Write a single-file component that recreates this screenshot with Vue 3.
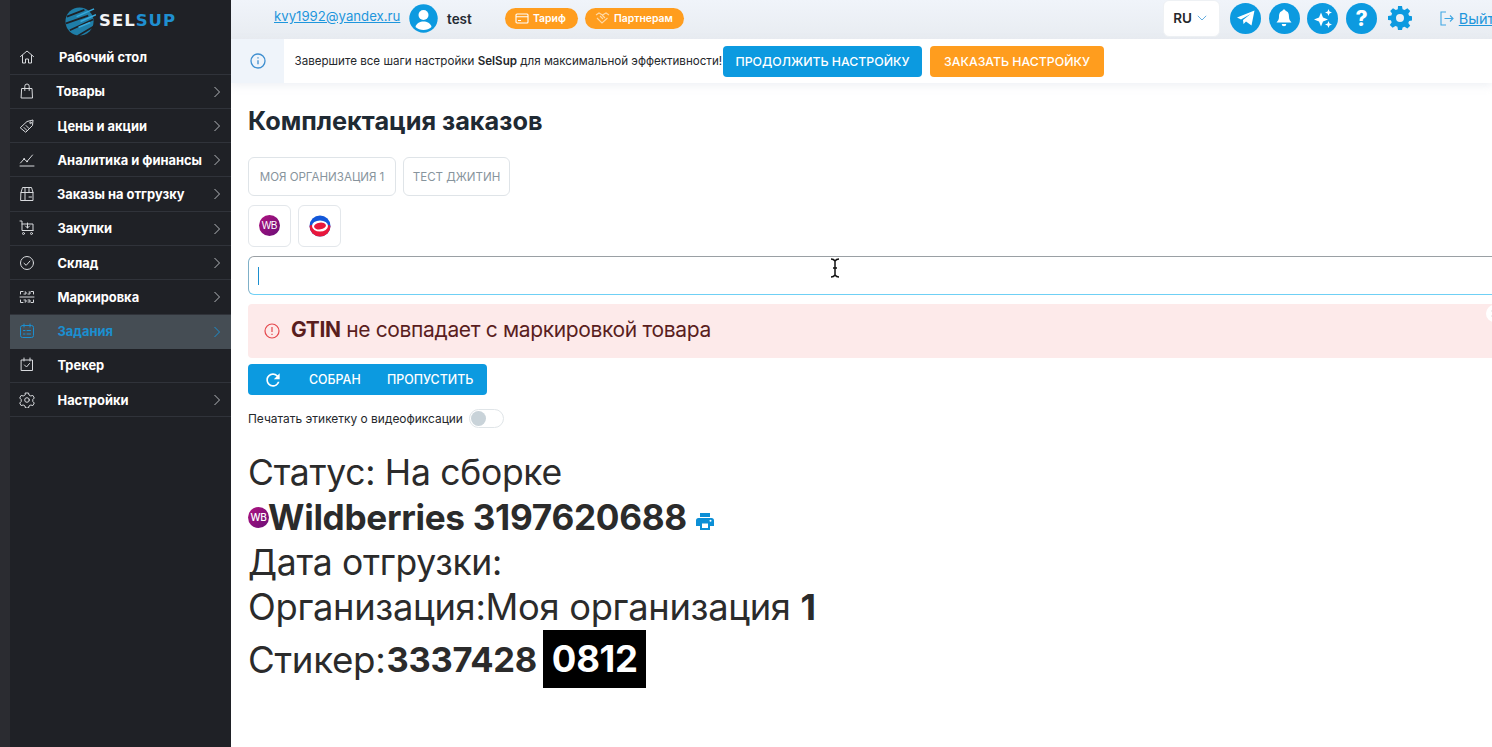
<script setup>
const menu = [
  { label: 'Рабочий стол', icon: 'home', pad: 49, plain: true },
  { label: 'Товары', icon: 'bag', pad: 46 },
  { label: 'Цены и акции', icon: 'tag', pad: 47.5 },
  { label: 'Аналитика и финансы', icon: 'chart', pad: 47.5 },
  { label: 'Заказы на отгрузку', icon: 'box', pad: 47 },
  { label: 'Закупки', icon: 'cart', pad: 47.5 },
  { label: 'Склад', icon: 'check', pad: 47.5 },
  { label: 'Маркировка', icon: 'scan', pad: 47.5 },
  { label: 'Задания', icon: 'tasks', pad: 47.5, active: true },
  { label: 'Трекер', icon: 'tracker', pad: 47.5, plain: true },
  { label: 'Настройки', icon: 'gear', pad: 47.5 }
]
</script>

<template>
  <div class="app">
    <div class="rail"></div>
    <aside class="sidebar">
      <div class="logo">
        <svg width="31" height="31" viewBox="0 0 32 32" fill="none">
          <circle cx="15" cy="17" r="14.500" fill="#1f7ea8" />
          <path d="M2 12 L20 5 M1 19 L24 11 M5 26 L29 15 M13 32 L30 22" stroke="#1f2126" stroke-width="1.800" />
          <path d="M12 12 L30 4 M16 17 L32 10 M14 23 L26 18" stroke="#37a9dc" stroke-width="1.600" />
        </svg>
        <span class="logo-text"><b class="sel">SEL</b><b class="sup">SUP</b></span>
      </div>
      <nav class="menu">
        <div v-for="item in menu" :key="item.label" class="row" :class="{ active: item.active }">
          <span class="ico">
            <svg width="16" height="16" viewBox="0 0 16 16" fill="none" stroke="currentColor" stroke-width="1" stroke-linecap="round" stroke-linejoin="round">
              <template v-if="item.icon === 'home'"><path d="M1.500 7.500 8 2l6.500 5.500M3.500 6.500V14h3v-4h3v4h3V6.500" /></template>
              <template v-else-if="item.icon === 'bag'"><path d="M3 5.500h10l.500 9.500h-11zM5.800 7.500V3.200a2.200 2.200 0 0 1 4.400 0v4.300" /></template>
              <template v-else-if="item.icon === 'tag'"><path d="M1.500 9.500 8 3.500l6-1.500-.5 5.500-6.500 6.500zM5 9.500l3 3M7 7.500l3 3" /><circle cx="11.500" cy="4.800" r=".8" /></template>
              <template v-else-if="item.icon === 'chart'"><path d="M1 14h14M1.500 11 5 7l3 2.500L13.500 3" /><circle cx="5" cy="7" r=".5" /><circle cx="8" cy="9.500" r=".5" /></template>
              <template v-else-if="item.icon === 'box'"><path d="M2 6.500 3.500 1.500h9L14 6.500V14.500H2zM2 6.500h12M6 1.500v13M10 1.500v5M10 11h2.500" /></template>
              <template v-else-if="item.icon === 'cart'"><path d="M1 1h2v9.500h11M3 4h11v6.500M8.500 3v5M6.500 6l2 2 2-2" /><circle cx="4.500" cy="13.500" r="1" /><circle cx="12.500" cy="13.500" r="1" /></template>
              <template v-else-if="item.icon === 'check'"><circle cx="8" cy="8" r="6.500" /><path d="M5 8.300 7.200 10.300 11 6" /></template>
              <template v-else-if="item.icon === 'scan'"><path d="M1.500 5V2.500H4M12 2.500h2.500V5M1.500 11v2.500H4M12 13.500h2.500V11M6 3h1v2H5M9 5h2V3h-1M5 11h2v2H6M9 13h2v-2H9M1 8h14" /></template>
              <template v-else-if="item.icon === 'tasks'"><rect x="1.500" y="2.500" width="13" height="12" rx="2" /><path d="M5 1v3M11 1v3M4.500 7.500h1.500M8 7.500h3.500M4.500 11h1.500M8 11h3.500" /></template>
              <template v-else-if="item.icon === 'tracker'"><path d="M2.500 3h11v10.500h-11zM5 1v3M11 1v3M5.500 8l2 2 3-3.500" /></template>
              <template v-else><path d="M6.500 1.500h3l.5 2 1.800 1 2-.6 1.500 2.600-1.500 1.500 0 2 1.500 1.500-1.500 2.600-2-.6-1.800 1-.5 2h-3l-.5-2-1.800-1-2 .6L.7 11.500l1.500-1.500v-2L.7 6.500l1.500-2.600 2 .6 1.800-1z" transform="translate(0 -.5)" /><circle cx="8" cy="8" r="2.300" /></template>
            </svg>
          </span>
          <span class="label" :style="{ left: item.pad + 'px' }">{{ item.label }}</span>
          <svg v-if="!item.plain" class="chev" width="8" height="12" viewBox="0 0 8 12" fill="none" stroke="currentColor" stroke-width="1"><path d="M1.500 1 6.500 6l-5 5" /></svg>
        </div>
      </nav>
    </aside>

    <main class="main">
      <header class="top">
        <a class="mail">kvy1992@yandex.ru</a>
        <svg class="avatar" width="29" height="29" viewBox="0 0 29 29">
          <circle cx="14.500" cy="14.500" r="14.200" fill="#0c9ae0" />
          <circle cx="14.500" cy="11" r="5" fill="#fff" />
          <path d="M6.500 23c1-4 4.500-5.500 8-5.500s7 1.500 8 5.500c-2 2-5 3-8 3s-6-1-8-3z" fill="#fff" />
        </svg>
        <span class="user">test</span>
        <span class="pill p1">
          <svg width="14" height="11" viewBox="0 0 14 11" fill="none" stroke="#fff" stroke-width="1.100"><rect x="1" y="1" width="12" height="9" rx="1" /><path d="M1 3.800h12M3 7.500h3" /></svg>
          Тариф
        </span>
        <span class="pill p2">
          <svg width="15" height="12" viewBox="0 0 15 12" fill="none" stroke="#ffd9a6" stroke-width="1.100"><path d="M1 3 4 1l3.500 2L11 1l3 2M2 6l5 5 5.500-5M5 4l3 3M7 3l3 3" /></svg>
          Партнерам
        </span>
        <div class="spacer"></div>
        <div class="lang">
          <span>RU</span>
          <svg width="10" height="6" viewBox="0 0 10 6" fill="none" stroke="#65aee0" stroke-width="1"><path d="M.8.8 5 5 9.200.8" /></svg>
        </div>
        <div class="rounds">
          <span class="round">
            <svg width="20" height="18" viewBox="0 0 20 18"><path d="M1 8.500 18.500 1.500 15.500 16.500 10 12.500 7.500 15 7 11 14.500 5 5 10.500z" fill="#fff" /></svg>
          </span>
          <span class="round">
            <svg width="18" height="20" viewBox="0 0 18 20"><path d="M9 1.500c1 0 1.500.6 1.500 1.300 3 .8 3.500 3.500 3.500 6.200 0 2.500 1.200 4 2.500 5.500H1.500C2.800 13 4 11.500 4 9c0-2.700.5-5.400 3.500-6.200C7.500 2.100 8 1.500 9 1.500z M6.700 16h4.600a2.300 2.300 0 0 1-4.600 0z" fill="#fff" /></svg>
          </span>
          <span class="round">
            <svg width="20" height="20" viewBox="0 0 20 20" fill="#fff"><path d="M8 4.500 10 9.500l5 2-5 2-2 5-2-5-5-2 5-2zM15.500 1l1 2.500L19 4.500l-2.500 1-1 2.500-1-2.500-2.500-1 2.500-1zM15.500 13l1 2.500 2.500 1-2.500 1-1 2.500-1-2.500-2.500-1 2.500-1z" /></svg>
          </span>
          <span class="round q">?</span>
          <svg class="cog" width="24" height="24" viewBox="0 0 24 24"><path fill="#0c9ae0" fill-rule="evenodd" d="M10 0h4l.6 3.300 2 .8L19.400 2.200l2.800 2.800-1.900 2.800.8 2 3.300.6v4l-3.300.6-.8 2 1.900 2.800-2.800 2.800-2.800-1.900-2 .8L14 24h-4l-.6-3.300-2-.8-2.800 1.900-2.800-2.800 1.900-2.800-.8-2L0 14v-4l3.300-.6.8-2L2.200 5 5 2.200l2.800 1.900 2-.8zM12 8a4 4 0 1 0 0 8 4 4 0 0 0 0-8z" /></svg>
        </div>
        <span class="exit">
          <svg width="14" height="15" viewBox="0 0 14 15" fill="none" stroke="#3ea6e3" stroke-width="1.100"><path d="M6 1H1v13h5M4.500 7.500H13M10 4.500l3 3-3 3" /></svg>
          <a>Выйти</a>
        </span>
      </header>

      <section class="banner">
        <div class="info">
          <svg width="16" height="16" viewBox="0 0 16 16" fill="none" stroke="#3f8fd0" stroke-width="1.300"><circle cx="8" cy="8" r="7" /><path d="M8 7.200v4M8 4.300v1.300" /></svg>
        </div>
        <div class="banner-body">
          <span class="banner-text">Завершите все шаги настройки <b>SelSup</b> для максимальной эффективности!</span>
          <button class="cta blue">ПРОДОЛЖИТЬ НАСТРОЙКУ</button>
          <button class="cta orange">ЗАКАЗАТЬ НАСТРОЙКУ</button>
        </div>
      </section>

      <div class="content">
        <h1>Комплектация заказов</h1>
        <div class="orgs">
          <button class="org o1">МОЯ ОРГАНИЗАЦИЯ 1</button>
          <button class="org o2">ТЕСТ ДЖИТИН</button>
        </div>
        <div class="markets">
          <button class="mp"><span class="wb">WB</span></button>
          <button class="mp">
            <svg width="22" height="22" viewBox="0 0 22 22">
              <circle cx="11" cy="11" r="10.500" fill="#1257d9" />
              <path d="M.5 11a10.500 10.500 0 0 0 21 0c0-1-6-2-10.500-2S.5 10 .5 11z" fill="#e8173c" />
              <ellipse cx="11" cy="11" rx="8" ry="5.500" fill="#fff" />
              <ellipse cx="11" cy="11" rx="6" ry="3.400" fill="#e8173c" transform="rotate(-8 11 11)" />
            </svg>
          </button>
        </div>
        <div class="field"><span class="caret"></span></div>
        <div class="alert">
          <svg width="16" height="16" viewBox="0 0 16 16" fill="none" stroke="#e5484d" stroke-width="1.200"><circle cx="8" cy="8" r="7" /><path d="M8 4v5M8 10.800v1.300" /></svg>
          <span class="alert-text"><b>GTIN</b> не совпадает с маркировкой товара</span>
          <span class="alert-close">
            <svg width="17" height="17" viewBox="0 0 17 17" fill="none" stroke="#ddd" stroke-width="1.300"><path d="M5.500 5.500l6 6M11.500 5.500l-6 6" /></svg>
          </span>
        </div>
        <div class="actions">
          <span class="reload">
            <svg width="20" height="20" viewBox="0 0 24 24"><path fill="#fff" d="M17.650 6.350A7.958 7.958 0 0 0 12 4c-4.420 0-7.990 3.580-7.990 8s3.570 8 7.990 8c3.730 0 6.840-2.550 7.730-6h-2.080A5.990 5.990 0 0 1 12 18c-3.310 0-6-2.690-6-6s2.690-6 6-6c1.660 0 3.140.69 4.220 1.780L13 11h7V4l-2.350 2.350z" /></svg>
          </span>
          <span class="act a1">СОБРАН</span>
          <span class="act">ПРОПУСТИТЬ</span>
        </div>
        <div class="toggle-row">
          <span>Печатать этикетку о видеофиксации</span>
          <span class="toggle"><i></i></span>
        </div>
        <div class="info-block">
          <div class="l-status">Статус: На сборке</div>
          <div class="wb-line">
            <span class="wb small">WB</span><b>Wildberries 3197620688</b>
            <svg class="printer" width="18" height="17" viewBox="0 0 18 17"><path fill="#0c8fd6" fill-rule="evenodd" d="M4 0h10v4H4zM2.500 5h13A2.500 2.500 0 0 1 18 7.500V13h-4v4H4v-4H0V7.500A2.500 2.500 0 0 1 2.500 5zM6 10.500V15h6v-4.500zM14.500 6.800a1 1 0 1 0 0 2 1 1 0 0 0 0-2z" /></svg>
          </div>
          <div class="l-status">Дата отгрузки:</div>
          <div class="l-org">Организация:Моя организация <b>1</b></div>
          <div class="sticker"><span class="s-label">Стикер:</span><b>3337428</b><span class="code">0812</span></div>
        </div>
      </div>
    </main>

    <svg class="ibeam" width="10" height="20" viewBox="0 0 10 20" fill="none" stroke="#111" stroke-width="1.500"><path d="M1 1c2 0 3 .5 4 2 1-1.500 2-2 4-2M5 3v14M1 19c2 0 3-.5 4-2 1 1.500 2 2 4 2M3 10h4" /></svg>
  </div>
</template>

<style>
html, body { margin: 0; overflow: hidden; background: #fff; }
</style>

<style scoped>
.app {
  position: relative;
  display: flex;
  width: 1492px;
  height: 747px;
  overflow: hidden;
  font-family: Inter, "Noto Sans", sans-serif;
  color: #25282c;
  background: #fff;
}
.rail { width: 10px; flex: none; background: #2b2c31; }
.sidebar { width: 221px; flex: none; background: #1f2126; color: #fff; }
.logo { height: 40.400px; display: flex; align-items: center; padding-left: 55px; gap: 3px; box-sizing: border-box; }
.logo-text { font-family: "DejaVu Sans", sans-serif; font-size: 16.500px; letter-spacing: 1px; }
.sel { color: #f2f4f6; }
.sup { color: #1f8fd0; }
.row {
  position: relative;
  height: 34.280px;
  box-sizing: border-box;
  border-bottom: 1px solid #30333a;
  display: flex;
  align-items: center;
  font-size: 12.900px;
  font-weight: 700;
}
.ico { margin-left: 8.500px; width: 16px; height: 16px; color: #d8dadd; display: flex; }
.label { position: absolute; top: 50%; transform: translateY(-50%); white-space: nowrap; }
.chev { position: absolute; right: 10px; top: 11px; color: #b4b7bb; }
.row.active { background: #454d54; color: #1b8fd0; border-bottom-color: #454d54; }
.row.active .ico, .row.active .chev { color: #1b8fd0; }

.main { flex: none; width: 1261px; overflow: hidden; }
.top {
  height: 39px;
  display: flex;
  align-items: center;
  background: linear-gradient(180deg, #f0f4fa, #e8ecf1);
  padding-left: 43px;
  width: 1300px;
  box-sizing: border-box;
}
.mail { color: #1e96dc; font-size: 13.200px; text-decoration: underline; margin-top: -7px; width: 125px; white-space: nowrap; flex: none; }
.avatar { margin-left: 10px; margin-top: -3px; flex: none; }
.user { font-size: 13.500px; font-weight: 600; margin-left: 9px; margin-top: -2px; color: #242a33; width: 58px; flex: none; }
.pill {
  display: flex;
  align-items: center;
  gap: 4px;
  height: 21px;
  border-radius: 11px;
  background: #ff9d1e;
  color: #fff;
  font-size: 10.400px;
  font-weight: 600;
  margin-top: -3px;
  padding-left: 10px;
  box-sizing: border-box;
  flex: none;
}
.p1 { width: 73px; }
.p2 { margin-left: 7px; width: 99px; }
.spacer { width: 479px; flex: none; }
.lang {
  width: 57px;
  height: 37px;
  margin-top: -3px;
  background: #fff;
  border: 1px solid #eef1f4;
  border-radius: 6px;
  box-sizing: border-box;
  display: flex;
  align-items: center;
  justify-content: center;
  gap: 5px;
  padding-right: 3px;
  font-size: 13.500px;
  font-weight: 600;
  flex: none;
}
.rounds { display: flex; align-items: center; gap: 7.700px; margin-left: 10px; margin-top: -3px; flex: none; }
.round {
  width: 31px;
  height: 31px;
  border-radius: 50%;
  background: #0c9ae0;
  display: flex;
  align-items: center;
  justify-content: center;
  color: #fff;
}
.q { font-size: 21px; font-weight: 800; }
.cog { margin-left: 3px; }
.exit { display: flex; align-items: center; gap: 5px; margin-left: 28px; margin-top: -3px; flex: none; }
.exit a { color: #1e96dc; font-size: 14.500px; text-decoration: underline; }

.banner { height: 44px; display: flex; box-shadow: 0 3px 8px rgba(220, 225, 232, .45); position: relative; }
.info { width: 53px; background: #eff4fa; display: flex; align-items: center; justify-content: center; }
.banner-body { flex: 1; display: flex; align-items: center; padding-left: 10.500px; }
.banner-text { font-size: 11.600px; color: #25282c; white-space: nowrap; width: 428.500px; flex: none; }
.banner-text b { font-weight: 600; }
.cta {
  height: 31px;
  border: 0;
  border-radius: 4px;
  color: #fff;
  font: 500 12.300px Inter, sans-serif;
  padding: 0;
  margin-right: 8px;
  flex: none;
}
.blue { background: #0c9ae0; width: 199px; }
.orange { background: #ff9d1e; width: 174px; }

.content { padding: 20px 0 0 17px; width: 1300px; box-sizing: border-box; }
h1 { margin: 0; font-size: 25.300px; line-height: 36px; font-weight: 700; color: #1f2a33; }
.orgs { display: flex; gap: 7px; margin-top: 18px; }
.org {
  height: 39px;
  background: #fff;
  border: 1px solid #dfe4e8;
  border-radius: 6px;
  color: #87949d;
  font: 400 11.550px Inter, sans-serif;
  padding: 0;
}
.o1 { width: 148px; }
.o2 { width: 107px; }
.markets { display: flex; gap: 7px; margin-top: 9px; }
.mp {
  width: 43px;
  height: 42px;
  background: #fff;
  border: 1px solid #e3e7eb;
  border-radius: 6px;
  display: flex;
  align-items: center;
  justify-content: center;
  padding: 0 0 1px;
}
.wb {
  width: 21px;
  height: 21px;
  border-radius: 50%;
  background: linear-gradient(135deg, #b0127f, #6a0f78);
  color: #fff;
  font-size: 10px;
  font-weight: 500;
  letter-spacing: -.3px;
  display: inline-flex;
  align-items: center;
  justify-content: center;
}
.field {
  height: 39px;
  margin-top: 9px;
  box-sizing: border-box;
  border: 1px solid #9aa0a4;
  border-bottom-color: #6fd0f5;
  border-left-color: #7fb0c8;
  border-radius: 6px;
  display: flex;
  align-items: center;
  padding-left: 9px;
}
.caret { width: 1px; height: 18px; background: #1b8fd0; }
.alert {
  position: relative;
  height: 54px;
  margin-top: 9px;
  background: #fdeaea;
  border-radius: 4px;
  display: flex;
  align-items: center;
  padding-left: 16px;
  gap: 11px;
}
.alert-text { font-size: 21px; line-height: 52px; color: #5a1e1e; letter-spacing: -.35px; margin-top: -2px; }
.alert-text b { font-weight: 700; }
.alert-close {
  position: absolute;
  left: 1238px;
  top: 1px;
  width: 17px;
  height: 17px;
  border-radius: 50%;
  background: #fff;
  display: flex;
}
.actions {
  display: inline-flex;
  align-items: center;
  height: 31px;
  width: 239px;
  margin-top: 6px;
  background: #0c9ae0;
  border-radius: 4px;
  color: #fff;
  font-size: 12.400px;
  font-weight: 500;
  vertical-align: top;
}
.reload { display: flex; margin-left: 15px; width: 20px; }
.act { white-space: nowrap; }
.a1 { margin-left: 26px; margin-right: 26.500px; }
.toggle-row { display: flex; align-items: center; gap: 6px; margin-top: 13px; height: 20px; font-size: 11.950px; color: #25282c; }
.toggle {
  width: 35px;
  height: 19px;
  border: 1px solid #e0e5e8;
  border-radius: 10px;
  box-sizing: border-box;
  display: flex;
  align-items: center;
  padding-left: 1px;
}
.toggle i { width: 15px; height: 15px; border-radius: 50%; background: #c9d3d9; }
.info-block { margin-top: 22px; font-size: 35px; line-height: 45px; color: #2b2b2b; letter-spacing: -.3px; white-space: nowrap; }
.info-block b { font-weight: 700; }
.l-status { font-size: 35.500px; }
.l-org { font-size: 36.300px; }
.l-org b { font-size: 36px; }
.wb-line { display: flex; align-items: center; }
.wb-line b { font-size: 35.150px; }
.wb.small { flex: none; margin-right: -1px; }
.printer { margin-left: 9px; margin-top: 8px; }
.sticker { display: flex; align-items: center; height: 58px; }
.s-label { font-size: 36.700px; margin-right: 1px; }
.sticker b { font-size: 34.500px; }
.code { background: #000; color: #fff; font-size: 36.500px; font-weight: 700; padding: 0 8.500px; margin-left: 6.500px; height: 58px; line-height: 58px; }
.ibeam { position: absolute; left: 830px; top: 258px; }
</style>
